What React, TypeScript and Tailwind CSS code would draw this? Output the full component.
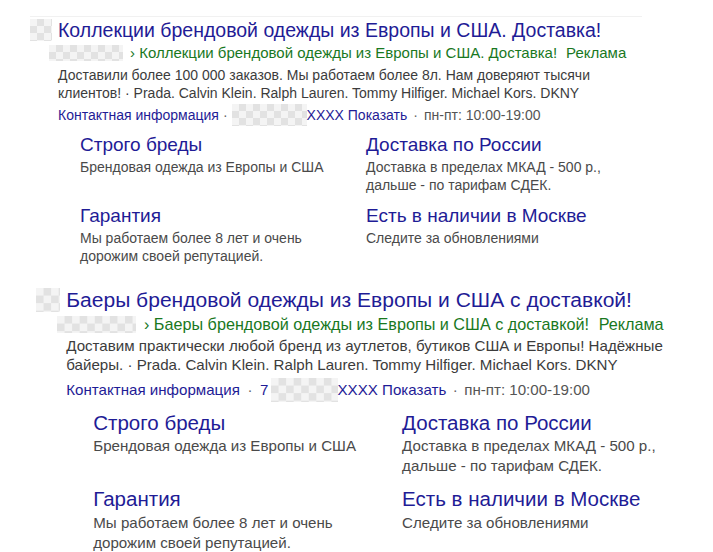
import React from 'react';

const navy = 'text-[#1f1c96]';
const green = 'text-[#19781e]';
const checker =
  'bg-[repeating-conic-gradient(#e2e2e2_0%_25%,#f4f4f4_0%_50%)] bg-[length:14px_14px]';

interface Sitelink {
  title: string;
  lines: string[];
}

interface AdProps {
  title: string;
  desc: string[];
  descMt: string;
  contactMt: string;
  phonePrefix?: string;
  dotGap: string;
  phoneMaskW: string;
  sitelinksPl: string;
  sitelinks: Sitelink[];
}

function Ad({
  title,
  desc,
  descMt,
  contactMt,
  phonePrefix,
  dotGap,
  phoneMaskW,
  sitelinksPl,
  sitelinks,
}: AdProps) {
  return (
    <div className="flex flex-col">
      {/* Title row */}
      <div className="flex items-center gap-[6px] h-[22px]">
        <div className={`w-[22px] h-[22px] shrink-0 ${checker}`}></div>
        <h2 className={`text-[19.5px] leading-[22px] ${navy} whitespace-nowrap`}>{title}</h2>
      </div>

      {/* Url row */}
      <div className="flex items-center gap-[7px] mt-[3px] pl-[19px] h-[18px]">
        <div className={`w-[74px] h-[16px] shrink-0 ${checker}`}></div>
        <p className={`text-[15px] leading-[18px] ${green} whitespace-nowrap`}>
          › {title}
          <span className="ml-[9px]">Реклама</span>
        </p>
      </div>

      {/* Body */}
      <div className="pl-[28px] flex flex-col">
        <div className={`${descMt} text-[14px] leading-[18px] text-[#3c3c3c] whitespace-nowrap`}>
          {desc.map((l) => (
            <p key={l}>{l}</p>
          ))}
        </div>

        <div className={`${contactMt} h-[18px] flex items-center text-[14px] leading-[18px] whitespace-nowrap`}>
          <span className={navy}>Контактная информация</span>
          <span className={`text-[#666] ${dotGap}`}>·</span>
          {phonePrefix && <span className={`${navy} mr-[2px]`}>{phonePrefix}</span>}
          <div className={`${phoneMaskW} h-[22px] shrink-0 ${checker}`}></div>
          <span className={navy}>XXXX Показать</span>
          <span className="text-[#666] mx-[6px]">·</span>
          <span className="text-[#555]">пн-пт: 10:00-19:00</span>
        </div>

        {/* Sitelinks */}
        <div className={`mt-[10px] ${sitelinksPl} grid grid-cols-[286px_286px] gap-y-[11px]`}>
          {sitelinks.map((s) => (
            <div key={s.title} className="flex flex-col">
              <p className={`text-[19px] leading-[22px] ${navy} whitespace-nowrap`}>{s.title}</p>
              <div className="mt-[2px] text-[14px] leading-[18px] text-[#4a4a4a] whitespace-nowrap">
                {s.lines.map((l) => (
                  <p key={l}>{l}</p>
                ))}
              </div>
            </div>
          ))}
        </div>
      </div>
    </div>
  );
}

const sitelinks: Sitelink[] = [
  { title: 'Строго бреды', lines: ['Брендовая одежда из Европы и США'] },
  {
    title: 'Доставка по России',
    lines: ['Доставка в пределах МКАД - 500 р.,', 'дальше - по тарифам СДЕК.'],
  },
  { title: 'Гарантия', lines: ['Мы работаем более 8 лет и очень', 'дорожим своей репутацией.'] },
  { title: 'Есть в наличии в Москве', lines: ['Следите за обновлениями'] },
];

export default function App() {
  return (
    <div className="w-[713px] h-[552px] bg-white overflow-hidden font-['Liberation_Sans',Arial,sans-serif]">
      <div className="pt-[16px] pl-[30px]">
        <div className="w-[612px] h-px bg-[#f1f1f1] mb-[2px]"></div>
        <Ad
          title="Коллекции брендовой одежды из Европы и США. Доставка!"
          desc={[
            'Доставили более 100 000 заказов. Мы работаем более 8л. Нам доверяют тысячи',
            'клиентов! · Prada. Calvin Klein. Ralph Lauren. Tommy Hilfiger. Michael Kors. DKNY',
          ]}
          descMt="mt-[4px]"
          contactMt="mt-[4px]"
          dotGap="mx-[4px]"
          phoneMaskW="w-[75px]"
          sitelinksPl="pl-[22px]"
          sitelinks={sitelinks}
        />
      </div>

      <div className="mt-[23px] pl-[36px]">
        <div className="[zoom:1.08]">
          <Ad
            title="Баеры брендовой одежды из Европы и США с доставкой!"
            desc={[
              'Доставим практически любой бренд из аутлетов, бутиков США и Европы! Надёжные',
              'байеры. · Prada. Calvin Klein. Ralph Lauren. Tommy Hilfiger. Michael Kors. DKNY',
            ]}
            descMt="mt-[1.5px]"
            contactMt="mt-[5px]"
            phonePrefix="7"
            dotGap="mx-[7px]"
            phoneMaskW="w-[62px]"
            sitelinksPl="pl-[25px]"
            sitelinks={sitelinks}
          />
        </div>
      </div>
    </div>
  );
}
